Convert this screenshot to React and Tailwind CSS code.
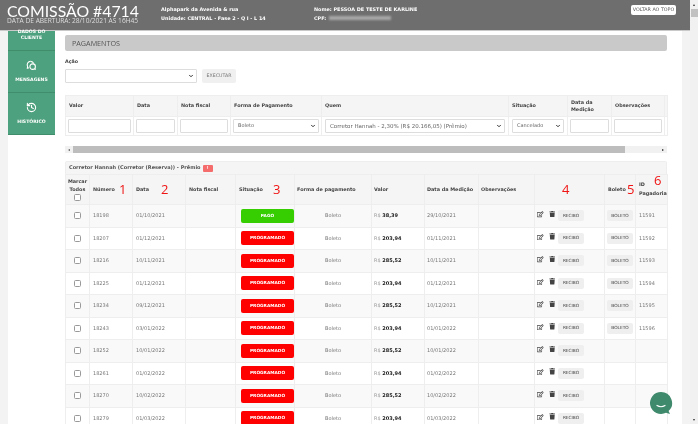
import React from 'react';
import { ChevronDown, History } from 'lucide-react';
import { FaRegEdit, FaTrash } from 'react-icons/fa';

const filterCols = [68, 44, 53, 91, 187, 59, 44, 53, 3];
const listCols = [24, 43, 53, 50, 59, 77, 53, 54, 56, 70, 31, 32];

const rows = [
  ['18198', '01/10/2021', '38,39', '29/10/2021', '11591'],
  ['18207', '01/12/2021', '203,94', '01/11/2021', '11592'],
  ['18216', '10/11/2021', '285,52', '10/11/2021', '11593'],
  ['18225', '01/12/2021', '203,94', '01/12/2021', '11594'],
  ['18234', '09/12/2021', '285,52', '10/12/2021', '11595'],
  ['18243', '03/01/2022', '203,94', '01/01/2022', '11596'],
  ['18252', '10/01/2022', '285,52', '10/01/2022', ''],
  ['18261', '01/02/2022', '203,94', '01/02/2022', ''],
  ['18270', '10/02/2022', '285,52', '10/02/2022', ''],
  ['18279', '01/03/2022', '203,94', '01/03/2022', ''],
];

function FakeSelect({ value, className }) {
  return (
    <div className={`flex h-[14px] items-center justify-between rounded-[1px] border border-[#dddddd] bg-white pl-[4px] pr-[2px] text-[#666666] ${className}`}>
      <span className="truncate">{value}</span>
      <ChevronDown size={6} strokeWidth={4} className="shrink-0 text-[#333333]" />
    </div>
  );
}

function TextInput() {
  return <div className="mx-auto h-[14px] w-[calc(100%-4px)] rounded-[1px] border border-[#dddddd] bg-white" />;
}

function Check() {
  return <input type="checkbox" className="mx-auto block h-[7px] w-[7px] appearance-none rounded-[1.5px] border border-[#999999] bg-white" />;
}

function SmallButton({ children }) {
  return (
    <span className="flex h-[11px] w-[26px] items-center justify-center rounded-[2px] bg-[#efefef] text-[4.3px] leading-none text-[#444444]">
      {children}
    </span>
  );
}

function Mark({ className, children }) {
  return <span className={`absolute font-['Open_Sans',sans-serif] text-[13px] font-normal leading-none text-[#f01414] ${className}`}>{children}</span>;
}

function SideItem({ icon, label }) {
  return (
    <div className="flex h-[42px] flex-col items-center justify-center gap-[7px] border-b border-[#3f8d6b] text-white">
      {icon}
      <span className="text-[4.6px] font-bold leading-none">{label}</span>
    </div>
  );
}

export default function App() {
  return (
    <div className="relative flex h-[424px] w-[698px] overflow-hidden bg-white font-['DejaVu_Sans',sans-serif] text-[5px] text-[#777777] blur-[0.35px]">
      <div className="flex w-[690px] flex-col">
        <header className="flex h-[31px] shrink-0 items-start border-b border-[#c9c9c9] bg-[#6e6e6e] text-white">
          <div className="ml-[7px] mt-[4px] w-[143px] whitespace-nowrap">
            <div className="font-['Lato',sans-serif] text-[15.8px] leading-[13px]">COMISSÃO #4714</div>
            <div className="font-['Open_Sans',sans-serif] text-[6.6px] leading-[7px] text-[#dddddd]">DATA DE ABERTURA: 28/10/2021 ÀS 16H45</div>
          </div>
          <div className="ml-[11px] mt-[7px] w-[153px] space-y-[3.5px] text-[4.9px] font-bold leading-[5px]">
            <div>Alphapark da Avenida &amp; rua</div>
            <div>Unidade: CENTRAL - Fase 2 - Q I - L 14</div>
          </div>
          <div className="mt-[7px] w-[317px] space-y-[3.5px] text-[4.9px] font-bold leading-[5px]">
            <div>Nome: PESSOA DE TESTE DE KARLINE</div>
            <div className="flex items-center gap-[3px]">
              CPF:
              <span className="h-[4px] w-[62px] bg-white/40 blur-[1px]" />
            </div>
          </div>
          <div className="mt-[5px] flex h-[10px] w-[45px] items-center justify-center rounded-[2px] bg-white text-[4.8px] text-[#555555]">
            VOLTAR AO TOPO
          </div>
        </header>

        <div className="flex min-h-0 flex-1">
          <div className="w-[8px] shrink-0 bg-[#f3f3f3]" />

          <aside className="w-[47px] shrink-0 self-start bg-[#4ea17e]">
            <div className="flex h-[20px] flex-col items-center justify-end border-b border-[#3f8d6b] pb-[10px] text-center text-[4.6px] font-bold leading-[5.5px] text-white">
              <span>DADOS DO</span>
              <span>CLIENTE</span>
            </div>
            <SideItem
              label="MENSAGENS"
              icon={
                <svg width="11" height="11" viewBox="0 0 24 24" fill="none" stroke="currentColor" strokeWidth="2.4">
                  <path d="M10 3a7.5 7.5 0 0 0-6.5 11L3 18l3.5-1" />
                  <path d="M10 3a7.5 7.5 0 0 1 7 5" />
                  <circle cx="14.5" cy="14.5" r="6" />
                  <path d="M19 19l2 2" />
                </svg>
              }
            />
            <SideItem label="HISTÓRICO" icon={<History size={11} strokeWidth={2.4} />} />
          </aside>

          <main className="w-[627px] shrink-0 pl-[10px] pr-[15px] pt-[4px]">
            <div className="flex h-[16px] items-center rounded-[2px] bg-[#c9c9c9] pl-[7px] font-['Open_Sans',sans-serif] text-[7.2px] text-[#555555]">
              PAGAMENTOS
            </div>

            <div className="mt-[8px] h-[10px] text-[4.8px] font-bold leading-[6px] text-[#444444]">Ação</div>
            <div className="flex items-center gap-[5px]">
              <FakeSelect value="" className="w-[132px]" />
              <span className="flex h-[14px] w-[34px] items-center justify-center rounded-[2px] bg-[#f0f0f0] text-[4.7px] text-[#777777]">
                EXECUTAR
              </span>
            </div>

            <table className="mt-[12px] w-[602px] table-fixed border-collapse border border-[#eeeeee]">
              <colgroup>
                {filterCols.map((w, i) => <col key={i} style={{ width: w }} />)}
              </colgroup>
              <thead>
                <tr className="h-[21px] bg-[#f5f5f5] text-left text-[4.9px] font-bold leading-[7.5px] text-[#444444]">
                  {['Valor', 'Data', 'Nota fiscal', 'Forma de Pagamento', 'Quem', 'Situação', 'Data da Medição', 'Observações', ''].map((h, i) => (
                    <th key={i} className="border border-[#eeeeee] px-[3px] font-bold">{h}</th>
                  ))}
                </tr>
              </thead>
              <tbody>
                <tr className="h-[19px]">
                  <td className="border border-[#eeeeee]"><TextInput /></td>
                  <td className="border border-[#eeeeee]"><TextInput /></td>
                  <td className="border border-[#eeeeee]"><TextInput /></td>
                  <td className="border border-[#eeeeee] px-[2px]"><FakeSelect value="Boleto" className="text-[5px]" /></td>
                  <td className="border border-[#eeeeee] px-[3px]">
                    <FakeSelect value="Corretor Hannah - 2,30% (R$ 20.166,05) (Prêmio)" className="text-[5.5px]" />
                  </td>
                  <td className="border border-[#eeeeee] px-[3px]"><FakeSelect value="Cancelado" className="text-[5px]" /></td>
                  <td className="border border-[#eeeeee]"><TextInput /></td>
                  <td className="border border-[#eeeeee]"><TextInput /></td>
                  <td className="border border-[#eeeeee]" />
                </tr>
              </tbody>
            </table>

            <div className="mt-[10px] flex h-[7px] items-center bg-[#f1f1f1]">
              <span className="w-[8px] text-center text-[4px] leading-none text-[#555555]">◂</span>
              <div className="h-full w-[552px] bg-[#bdbdbd]" />
              <span className="ml-auto w-[8px] text-center text-[4px] leading-none text-[#222222]">▸</span>
            </div>

            <div className="mt-[8px] w-[602px] rounded-t-[2px] border-t border-[#eeeeee]">
              <div className="flex h-[12px] items-center gap-[2px] border-x border-[#eeeeee] bg-[#f5f5f5] pl-[3px] text-[5px] font-bold text-[#555555]">
                Corretor Hannah (Corretor (Reserva)) - Prêmio
                <span className="flex h-[7px] w-[10px] items-center justify-center rounded-[1px] bg-[#f56c6c] text-[4px] leading-none text-white">!</span>
              </div>
              <table className="w-[602px] table-fixed border-collapse">
                <colgroup>
                  {listCols.map((w, i) => <col key={i} style={{ width: w }} />)}
                </colgroup>
                <thead>
                  <tr className="h-[30px] bg-[#f5f5f5] text-left text-[4.9px] font-bold leading-[8.5px] text-[#444444]">
                    <th className="border border-[#eeeeee] pb-[2px] text-center font-bold">
                      Marcar Todos
                      <Check />
                    </th>
                    <th className="relative border border-[#eeeeee] px-[3px] font-bold">Número<Mark className="left-[29px] top-[8px]">1</Mark></th>
                    <th className="relative border border-[#eeeeee] px-[3px] font-bold">Data<Mark className="left-[28px] top-[8px]">2</Mark></th>
                    <th className="border border-[#eeeeee] px-[3px] font-bold">Nota fiscal</th>
                    <th className="relative border border-[#eeeeee] px-[3px] font-bold">Situação<Mark className="left-[37px] top-[8px]">3</Mark></th>
                    <th className="border border-[#eeeeee] px-[2px] font-bold">Forma de pagamento</th>
                    <th className="border border-[#eeeeee] px-[2px] font-bold">Valor</th>
                    <th className="border border-[#eeeeee] px-[2px] font-bold">Data da Medição</th>
                    <th className="border border-[#eeeeee] px-[2px] font-bold">Observações</th>
                    <th className="relative border border-[#eeeeee] font-bold"><Mark className="left-[27px] top-[8px]">4</Mark></th>
                    <th className="relative border border-[#eeeeee] px-[3px] font-bold">Boleto<Mark className="left-[22px] top-[8px]">5</Mark></th>
                    <th className="relative border border-[#eeeeee] px-[3px] pb-[2px] font-bold">ID Pagadoria<Mark className="left-[18px] top-[-1px]">6</Mark></th>
                  </tr>
                </thead>
                <tbody>
                  {rows.map((r, i) => (
                    <tr key={r[0]} className={i % 2 === 0 ? 'h-[22.5px] bg-[#f9f9f9]' : 'h-[22.5px] bg-white'}>
                      <td className="border border-[#eeeeee]"><Check /></td>
                      <td className="border border-[#eeeeee] px-[3px]">{r[0]}</td>
                      <td className="border border-[#eeeeee] px-[3px]">{r[1]}</td>
                      <td className="border border-[#eeeeee]" />
                      <td className="border border-[#eeeeee] pl-[5px]">
                        <div className={`flex h-[14px] w-[53px] items-center justify-center rounded-[2px] text-[4.3px] font-bold text-white ${i === 0 ? 'bg-[#36ce00]' : 'bg-[#ff0000]'}`}>
                          {i === 0 ? 'PAGO' : 'PROGRAMADO'}
                        </div>
                      </td>
                      <td className="border border-[#eeeeee] text-center">Boleto</td>
                      <td className="border border-[#eeeeee] px-[2px]">
                        <span className="text-[#999999]">R$ </span>
                        <span className="font-bold text-[#222222]">{r[2]}</span>
                      </td>
                      <td className="border border-[#eeeeee] px-[2px]">{r[3]}</td>
                      <td className="border border-[#eeeeee]" />
                      <td className="border border-[#eeeeee] pl-[2px]">
                        <div className="flex items-start text-[#444444]">
                          <FaRegEdit size={6.5} className="mt-[1px]" />
                          <FaTrash size={6.5} className="ml-[5px] mt-[0.5px]" />
                          <span className="ml-[3px]"><SmallButton>RECIBO</SmallButton></span>
                        </div>
                      </td>
                      <td className="border border-[#eeeeee] pl-[2px]">
                        {r[4] && <SmallButton>BOLETO</SmallButton>}
                      </td>
                      <td className="border border-[#eeeeee] px-[3px]">{r[4]}</td>
                    </tr>
                  ))}
                </tbody>
              </table>
            </div>
          </main>

          <div className="w-[8px] shrink-0 bg-[#f3f3f3]" />
        </div>
      </div>

      <div className="flex w-[8px] flex-col items-center bg-[#f1f1f1]">
        <span className="h-[9px] text-[4px] leading-[9px] text-[#333333]">▴</span>
        <div className="h-[8px] w-[7px] bg-[#c1c1c1]" />
        <span className="mt-auto h-[9px] text-[4px] leading-[9px] text-[#333333]">▾</span>
      </div>

      <svg className="absolute left-[649px] top-[391px]" width="24" height="24" viewBox="0 0 24 24">
        <path d="M12 1a11 11 0 1 0 5 20.8l4 1.2-1.4-3A11 11 0 0 0 12 1z" fill="#3f8a6d" />
        <path d="M8 14.5q4 2.5 8 0" fill="none" stroke="#ffffff" strokeWidth="1.2" strokeLinecap="round" />
      </svg>
    </div>
  );
}
